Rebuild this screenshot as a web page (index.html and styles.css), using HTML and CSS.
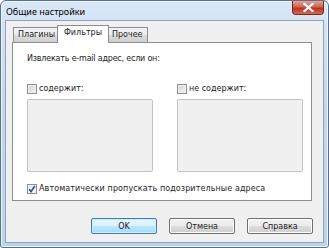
FILE: index.html
```html
<!DOCTYPE html>
<html lang="ru">
<head>
    <meta charset="UTF-8">
    <title>Общие настройки</title>
    <link rel="stylesheet" href="styles.css">
</head>
<body>
    <div class="window">
        <div class="titlebar">
            <span class="title">Общие настройки</span>
            <button class="close">
                <svg width="11" height="9" viewBox="0 0 11 9">
                    <path d="M1.5 1 L9.5 8 M9.5 1 L1.5 8" stroke="#fff" stroke-width="2.2" stroke-linecap="square"/>
                </svg>
            </button>
        </div>
        <div class="client">
            <div class="tabs">
                <div class="tab first">Плагины</div>
                <div class="tab active">Фильтры</div>
                <div class="tab">Прочее</div>
            </div>
            <div class="panel">
                <p class="caption">Извлекать e-mail адрес, если он:</p>
                <div class="lists">
                    <div class="col">
                        <label class="check"><span class="box"></span>содержит:</label>
                        <div class="listbox"></div>
                    </div>
                    <div class="col">
                        <label class="check"><span class="box"></span>не содержит:</label>
                        <div class="listbox"></div>
                    </div>
                </div>
                <label class="check auto">
                    <span class="box checked">
                        <svg width="8" height="8" viewBox="0 0 8 8">
                            <path d="M1.2 4.2 L3 6.6 L6.8 1" fill="none" stroke="#2a4fa8" stroke-width="1.6"/>
                        </svg>
                    </span>Автоматически пропускать подозрительные адреса
                </label>
            </div>
            <div class="actions">
                <button class="btn default">OK</button>
                <button class="btn">Отмена</button>
                <button class="btn">Справка</button>
            </div>
        </div>
    </div>
</body>
</html>
```

FILE: styles.css
```css
body {
    margin: 0;
    background: #fff;
    font-family: "DejaVu Sans", sans-serif;
    font-size: 8px;
    color: #1e1e1e;
}

.window {
    box-sizing: border-box;
    width: 329px;
    height: 248px;
    border: 1px solid #5a6f8c;
    border-radius: 6px 6px 3px 3px;
    background: linear-gradient(#d9e7f6, #c3d8ef 40%, #bcd3ec);
    box-shadow: inset 0 0 0 1px #eef5fc;
    display: flex;
    flex-direction: column;
}

.titlebar {
    height: 19px;
    display: flex;
    align-items: flex-start;
    justify-content: space-between;
}

.title {
    font-family: "Noto Sans", sans-serif;
    font-size: 9px;
    padding: 4px 0 0 5px;
    color: #000;
}

.close {
    width: 32px;
    height: 14px;
    margin-right: 4px;
    padding: 0;
    border: 1px solid #7a2a20;
    border-top: none;
    border-radius: 0 0 4px 4px;
    background: linear-gradient(#e6a497, #d0624f 45%, #b8331f 55%, #d36a50);
    display: flex;
    align-items: center;
    justify-content: center;
}

.client {
    box-sizing: border-box;
    flex: 1;
    margin: 0 4px 4px;
    border: 1px solid #8fa3bd;
    background: #f0f0f0;
    padding: 4px 10px 0 6px;
}

.tabs {
    display: flex;
    align-items: flex-end;
    height: 17px;
    position: relative;
    z-index: 1;
}

.tab {
    box-sizing: border-box;
    height: 15px;
    padding: 0 4px;
    border: 1px solid #8c8e94;
    border-bottom: none;
    margin-left: -1px;
    background: linear-gradient(#f3f3f3, #ebebeb 50%, #dddddd 50%, #cfcfcf);
    line-height: 14px;
}

.tab.first {
    margin-left: 1px;
}

.tab.active {
    height: 18px;
    margin: 0 -2px -1px -3px;
    padding: 0 6px;
    background: #fff;
    line-height: 14px;
    position: relative;
    z-index: 2;
}

.tab.active + .tab {
    margin-left: 0;
}

.panel {
    box-sizing: border-box;
    width: 300px;
    height: 159px;
    background: #fff;
    border: 1px solid #8c8e94;
    padding: 0 7px 0 14px;
}

.caption {
    margin: 10px 0 0;
    line-height: 11px;
    letter-spacing: -0.2px;
}

.lists {
    display: grid;
    grid-template-columns: 126px 126px;
    column-gap: 24px;
    margin-top: 19px;
}

.check {
    display: flex;
    align-items: center;
    gap: 2px;
    height: 11px;
}

.box {
    box-sizing: border-box;
    width: 10px;
    height: 10px;
    border: 1px solid #8f8f8f;
    background: linear-gradient(135deg, #d2d2d2, #f4f4f4);
    box-shadow: inset 0 0 0 1px #f0f0f0;
    display: flex;
    align-items: center;
    justify-content: center;
}

.box.checked {
    background: linear-gradient(135deg, #e2e2e2, #fbfbfb);
}

.listbox {
    box-sizing: border-box;
    height: 73px;
    margin-top: 5px;
    border: 1px solid #c3c3c3;
    border-radius: 2px;
    background: #f0f0f0;
}

.auto {
    margin-top: 11px;
    letter-spacing: 0.1px;
}

.actions {
    display: flex;
    justify-content: flex-end;
    gap: 12px;
    margin-top: 17px;
}

.btn {
    box-sizing: border-box;
    width: 66px;
    height: 16px;
    padding: 0;
    border: 1px solid #707070;
    border-radius: 2px;
    background: linear-gradient(#f2f2f2, #ebebeb 50%, #dddddd 50%, #cfcfcf);
    box-shadow: inset 0 0 0 1px #fcfcfc;
    font-family: "DejaVu Sans", sans-serif;
    font-size: 8px;
    color: #1e1e1e;
}

.btn.default {
    border-color: #3c7fb1;
    background: linear-gradient(#eaf6fd, #d9f0fc 50%, #bee6fd 50%, #a7d9f5);
    box-shadow: inset 0 0 0 1px #c9ecfb;
}
```
